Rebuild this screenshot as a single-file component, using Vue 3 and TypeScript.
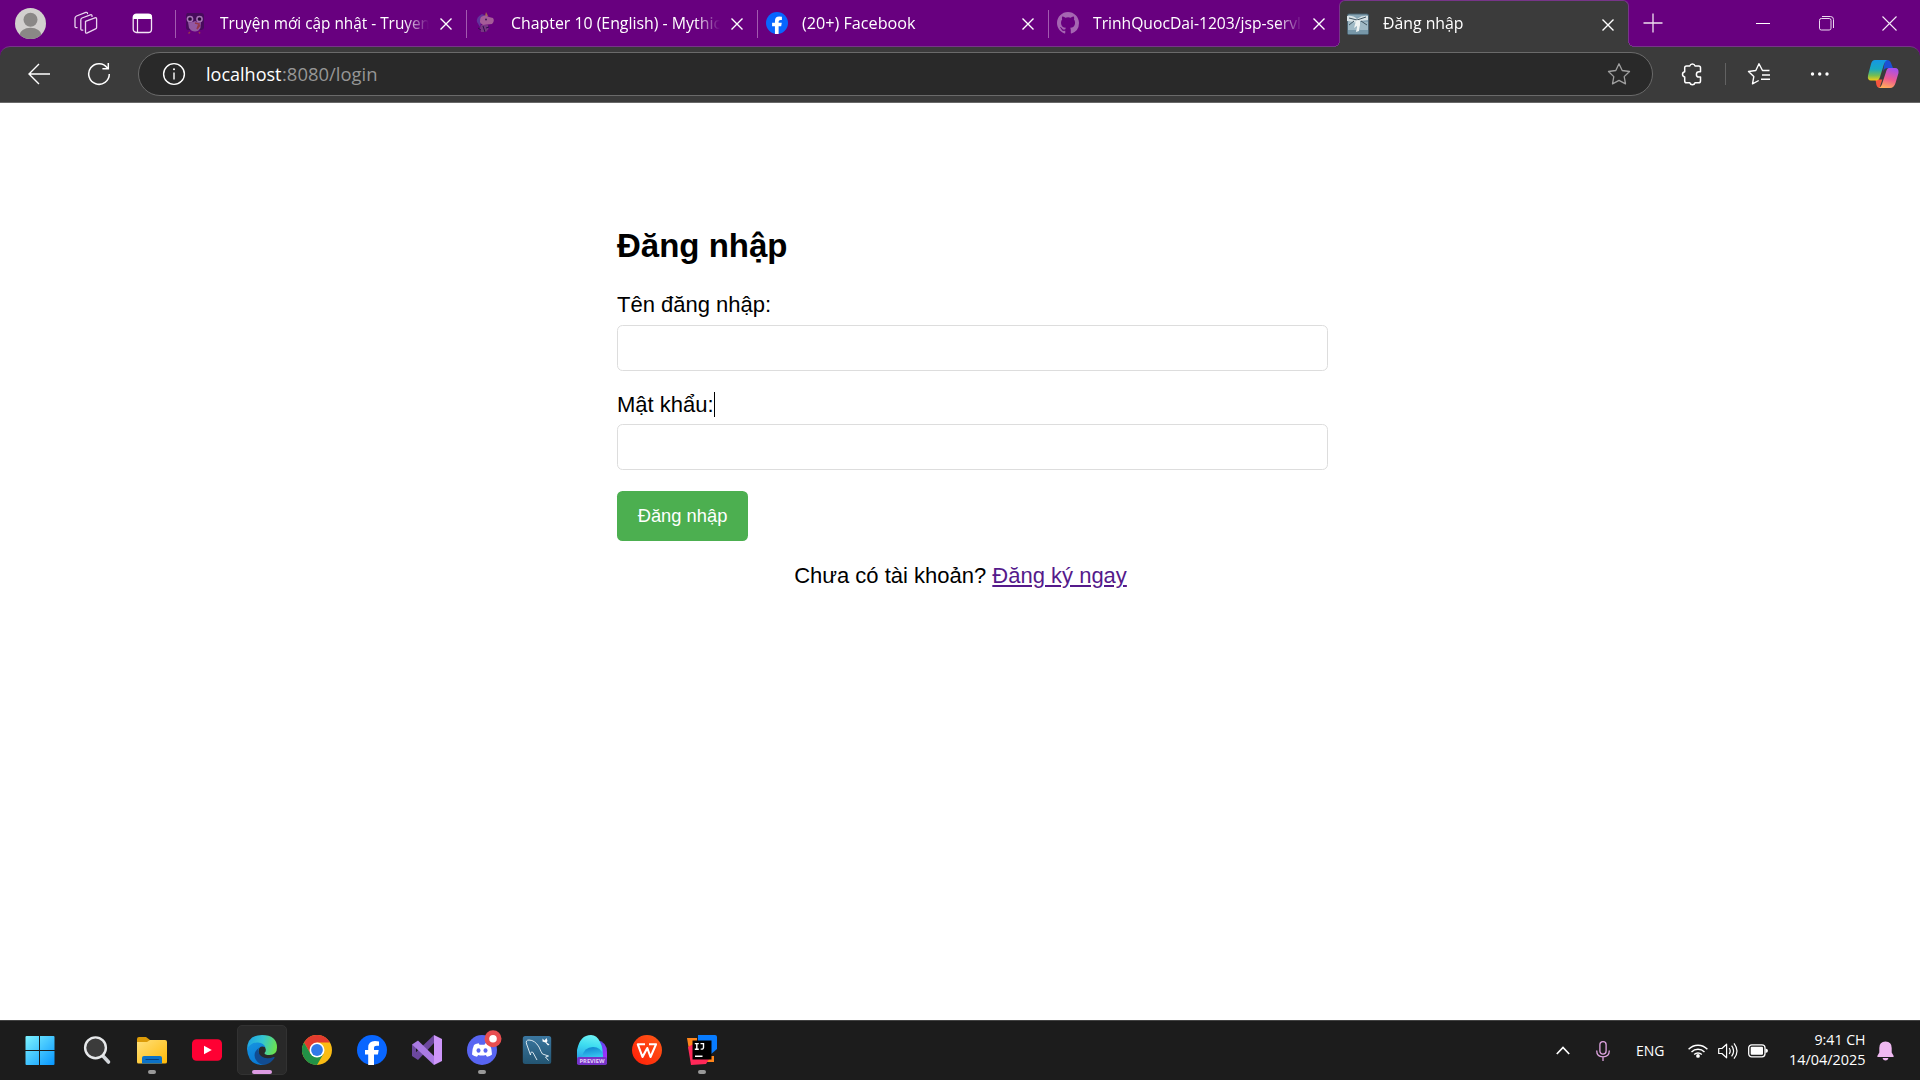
<script setup lang="ts">
import { ref } from 'vue'

interface Tab {
  id: string
  title: string
  width: number
}

const tabs: Tab[] = [
  { id: 'truyen', title: 'Truyện mới cập nhật - Truyen', width: 210 },
  { id: 'mythic', title: 'Chapter 10 (English) - Mythic', width: 210 },
  { id: 'facebook', title: '(20+) Facebook', width: 113.5 },
  { id: 'github', title: 'TrinhQuocDai-1203/jsp-servl', width: 208 },
  { id: 'login', title: 'Đăng nhập', width: 80.5 },
]

const activeTab = ref('login')

const apps = [
  { id: 'start' }, { id: 'search' }, { id: 'files', open: true }, { id: 'youtube' },
  { id: 'edge', active: true }, { id: 'chrome' }, { id: 'facebook' }, { id: 'vs' },
  { id: 'discord', open: true }, { id: 'mysql' }, { id: 'preview' }, { id: 'wps' },
  { id: 'idea', open: true },
]
</script>

<template>
  <div class="screen">
    <header class="tabstrip">
      <div class="strip-tools">
        <svg class="avatar" width="31" height="31" viewBox="0 0 31 31">
          <defs><clipPath id="av"><circle cx="15.5" cy="15.5" r="15.5" /></clipPath></defs>
          <g clip-path="url(#av)">
            <rect width="31" height="31" fill="#d2d0ce" />
            <circle cx="15.5" cy="11.7" r="7" fill="#8a8886" />
            <ellipse cx="15.5" cy="27" rx="11" ry="7.2" fill="#8a8886" />
          </g>
        </svg>
        <svg class="workspaces" width="24" height="24" viewBox="0 0 24 24" fill="none" stroke="#e9d5ee" stroke-width="1.3" stroke-linejoin="round" stroke-linecap="round">
          <path d="M11.5 10.3 20.9 6.8q1.7-.5 1.7 1.2v8.5q0 1-1 1.4l-8.2 4q-1.9.8-1.9-1z" />
          <path d="M18 5.4v-.7q-.2-1.4-1.7-.9L8 7Q6.800 7.500 6.800 9v9q.2 1.500 2 1.100" />
          <path d="M13.500 2.500q-.2-1.600-1.700-1.100L2.500 5Q1 5.700 1 7.200v8.300q.2 1.500 2 1.100" />
        </svg>
        <svg class="tabmenu" width="21" height="21" viewBox="0 0 21 21">
          <rect x="1.200" y="1.200" width="18.300" height="18.300" rx="3.300" fill="none" stroke="#f3e6f5" stroke-width="1.300" />
          <path d="M1 6V4q0-3 3-3h13q3 0 3 3v2z" fill="#fff" />
          <path d="M5.500 6v13.500" stroke="#f3e6f5" stroke-width="1.200" />
        </svg>
      </div>

      <div v-for="tab in tabs" :key="tab.id" class="tab" :class="{ active: tab.id === activeTab }">
        <span class="favicon">
          <svg v-if="tab.id === 'truyen'" width="22" height="22" viewBox="0 0 22 22">
            <path d="M3 1h14q3 0 3 3v11q0 3-3 3H4q-2 0-2-3V3z" fill="#470b5c" />
            <path d="M4 10q4 1 7-1 4 2 6 1l-.5 6q-2 3.500-5.500 3.500T5 16z" fill="#9358a2" />
            <circle cx="6" cy="7" r="2.600" fill="#290b39" stroke="#a873b5" stroke-width="1.500" />
            <circle cx="15.500" cy="7" r="2.600" fill="#290b39" stroke="#a873b5" stroke-width="1.500" />
            <path d="m11 11 4 1-2 5 3-4M6 20l-1.500 1.500M15 20l1 1.500" stroke="#963749" stroke-width="1.500" fill="none" />
          </svg>
          <svg v-else-if="tab.id === 'mythic'" width="22" height="22" viewBox="0 0 22 22">
            <path d="m10 4 1-4 2 4" fill="#a76a4f" />
            <path d="M2 10Q1 5 7 2l4 2-5 7-1 4z" fill="#62329b" />
            <path d="M6 5q4-3 8 0l4 1q2 3-1 6l-9 1q-5-3-2-8z" fill="#a55c98" />
            <path d="M6 13h7l.5 4-2.500 3H6l-1-4z" fill="#783583" />
            <path d="m3 16 3 2M8 14l2 6m4-5-3 1" stroke="#30104c" /><circle cx="11" cy="7.500" r="1" fill="#401858" />
          </svg>
          <svg v-else-if="tab.id === 'facebook'" width="22" height="22" viewBox="0 0 30 30">
            <circle cx="15" cy="15" r="15" fill="#0866ff" />
            <path d="M12.200 30V19.500H8.300v-5h3.900v-2.300q0-6 5.900-6 2.100 0 3.600.4v4.300h-2q-2.500 0-2.500 2.100v1.500h4.300l-.8 5h-3.500V30z" fill="#fff" />
          </svg>
          <svg v-else-if="tab.id === 'github'" width="22" height="22" viewBox="0 0 16 16">
            <path fill="#a566b2" d="M8 0C3.580 0 0 3.580 0 8c0 3.540 2.290 6.530 5.470 7.590.4.070.55-.17.55-.38v-1.490c-2.010.37-2.530-.49-2.690-.94-.09-.23-.48-.94-.82-1.130-.28-.15-.68-.52-.01-.53.63-.01 1.080.58 1.230.82.72 1.210 1.870.87 2.330.66.07-.52.28-.87.51-1.070-1.780-.2-3.640-.89-3.640-3.950 0-.87.31-1.590.82-2.150-.08-.2-.36-1.020.08-2.120 0 0 .67-.21 2.200.82a7.640 7.640 0 0 1 4 0c1.530-1.040 2.200-.82 2.200-.82.44 1.100.16 1.920.08 2.120.51.56.82 1.270.82 2.150 0 3.070-1.870 3.750-3.650 3.950.29.25.54.73.54 1.480v2.200c0 .21.15.46.55.38A8.010 8.010 0 0 0 16 8c0-4.420-3.580-8-8-8z" />
          </svg>
          <svg v-else width="22" height="22" viewBox="0 0 22 22">
            <rect x=".5" y="1" width="21" height="20.500" rx="1.500" fill="#86a4b4" stroke="#4b6371" />
            <path d="M1 9h8v12H1zM13 9h8v12h-8z" fill="#9fb9c5" /><path d="M1 17h20v4H1z" fill="#7797a8" />
            <path d="M0 3q6-1 10 3 5-4 11-3v4l-8 1-3 2-4-1-6-1z" fill="#d8e2e5" />
            <path d="m7 8-5 4M14 8l6 4M2 5l8 2 9-3" stroke="#405561" fill="none" />
            <path d="m10 7 3 1v4l-1 6-3 1 1-6-3 2 2-7z" fill="#eef2f2" />
          </svg>
        </span>
        <svg class="tab-title" width="212" height="26">
          <text x="0" y="18.3" :textLength="tab.width" lengthAdjust="spacingAndGlyphs">{{ tab.title }}</text>
        </svg>
        <svg class="tab-close" width="12" height="12" viewBox="0 0 12 12"><path d="m.5.5 11 11m0-11-11 11" stroke="#fff" stroke-width="1.400" /></svg>
      </div>

      <svg class="new-tab" width="20" height="20" viewBox="0 0 20 20"><path d="M.5 10h19M10 .5v19" stroke="#eee0f0" stroke-width="1.300" /></svg>
      <div class="window-controls">
        <svg width="14" height="14" viewBox="0 0 14 14"><path d="M0 7.500h14" stroke="#fff" /></svg>
        <svg width="15" height="15" viewBox="0 0 15 15" fill="none" stroke="#ecdaf0"><rect x=".5" y="2.500" width="11.500" height="11.500" rx="1.800" /><path d="M3 .5h8.500q3 0 3 3V12" /></svg>
        <svg width="15" height="15" viewBox="0 0 15 15"><path d="m.5.5 14 14m0-14-14 14" stroke="#f5ebf7" stroke-width="1.100" /></svg>
      </div>
    </header>

    <nav class="toolbar">
      <svg class="back" width="24" height="22" viewBox="0 0 24 22" fill="none" stroke="#fff" stroke-width="1.400"><path d="M23 11H2M12 1 2 11l10 10" /></svg>
      <svg class="reload" width="24" height="24" viewBox="0 0 24 24" fill="none" stroke="#fff" stroke-width="1.500"><path d="M22.300 12A10.300 10.300 0 1 1 20.500 6.200M21.300 1v5.800h-5.900" /></svg>
      <div class="address">
        <svg class="info" width="24" height="24" viewBox="0 0 24 24" fill="none" stroke="#fff"><circle cx="12" cy="12" r="10.400" stroke-width="1.400" /><path d="M12 10.500v7" stroke-width="1.400" /><circle cx="12" cy="7.300" r="1" fill="#fff" stroke="none" /></svg>
        <svg class="url" width="180" height="30">
          <text x="0" y="22" fill="#fff" textLength="75.500" lengthAdjust="spacingAndGlyphs">localhost</text>
          <text x="76" y="22" fill="#969696" textLength="95.500" lengthAdjust="spacingAndGlyphs">:8080/login</text>
        </svg>
        <svg class="star" width="24" height="24" viewBox="0 0 24 24" fill="none" stroke="#a0a0a0" stroke-width="1.300" stroke-linejoin="round"><path d="m12 1.800 3.200 6.700 7.300 1-5.300 5.100 1.300 7.300L12 18.400l-6.500 3.500 1.300-7.300L1.500 9.500l7.300-1z" /></svg>
      </div>
      <svg class="puzzle" width="22" height="24" viewBox="0 0 22 24" fill="none" stroke="#fff" stroke-width="1.500" stroke-linejoin="round"><path d="M5.500 3.900H8.800a2.700 2.700 0 0 1 5.200 0h3.700q1.800 0 1.800 1.800v4.100h-1.500a2.600 2.600 0 0 0 0 5.200h1.500v3.900q0 1.800-1.800 1.800H14a2.700 2.700 0 0 1-5.200 0H5.500q-1.800 0-1.800-1.800V15a2.700 2.700 0 0 1 0-5.300v-4q0-1.800 1.800-1.800z" /></svg>
      <span class="divider"></span>
      <svg class="favorites" width="24" height="24" viewBox="0 0 24 24" fill="none" stroke="#fff" stroke-width="1.400" stroke-linejoin="round"><path d="M22.500 8.500h-7L12 1.700 8.800 8.500l-7.300 1 5.300 5.100-1.300 7.300 6.200-3.400M15 13h8M14 17.200h9" /></svg>
      <svg class="more" width="20" height="6" viewBox="0 0 20 6" fill="#fff"><circle cx="2.500" cy="3" r="1.700" /><circle cx="9.700" cy="3" r="1.700" /><circle cx="17" cy="3" r="1.700" /></svg>
      <svg class="copilot" width="32" height="30" viewBox="0 0 32 30">
        <defs>
          <linearGradient id="cb" x1="0" y1="0" x2="0" y2="1"><stop offset="0" stop-color="#1597e5" /><stop offset=".45" stop-color="#19a9c0" /><stop offset=".75" stop-color="#72bd55" /><stop offset="1" stop-color="#f4cd16" /></linearGradient>
          <linearGradient id="cp" x1=".7" y1="0" x2=".4" y2="1"><stop offset="0" stop-color="#a34ff0" /><stop offset=".55" stop-color="#ee5a91" /><stop offset="1" stop-color="#ffab5a" /></linearGradient>
        </defs>
        <path d="M18 1h2q3 0 4 3l2 5h-5q-4 0-5 4z" fill="#1c50d5" />
        <path d="M8.500 20.500h6.800L12.500 29Q10 28.500 9.400 26z" fill="#f5553e" />
        <path d="M8 1h12q-2 1-3 4l-4 13q-1 3.500-4 3.500H4Q.2 21.500 1 16.500L4 5Q5 1 8 1z" fill="url(#cb)" />
        <path d="M22 9h6q4 0 3.500 5l-3 10q-1.500 5-5.500 5H11q3-.500 4-4l4-12q1-4 3-4z" fill="url(#cp)" />
      </svg>
    </nav>

    <main class="page">
      <section class="login">
        <h2>Đăng nhập</h2>
        <form @submit.prevent>
          <div class="group">
            <label for="user">Tên đăng nhập:</label>
            <input id="user" type="text" />
          </div>
          <div class="group">
            <label for="pass">Mật khẩu:<i class="caret"></i></label>
            <input id="pass" type="password" />
          </div>
          <button type="submit">Đăng nhập</button>
        </form>
        <p>Chưa có tài khoản? <a href="#">Đăng ký ngay</a></p>
      </section>
    </main>

    <footer class="taskbar">
      <div class="apps">
        <div v-for="app in apps" :key="app.id" class="app" :class="[app.id, { current: app.active, open: app.open }]">
          <svg v-if="app.id === 'start'" width="30" height="30" viewBox="0 0 30 30">
            <defs><linearGradient id="win" x1="0" y1="0" x2="1" y2="1"><stop offset="0" stop-color="#7df3ff" /><stop offset="1" stop-color="#0796ff" /></linearGradient></defs>
            <path d="M.5 2q0-1 1-1H14v14H.5zM15 1h13.500q1 0 1 1v13H15zM.5 16H14v14H1.500q-1 0-1-1zM15 16h14.500v13q0 1-1 1H15z" fill="url(#win)" />
          </svg>
          <svg v-else-if="app.id === 'search'" width="30" height="30" viewBox="0 0 30 30">
            <path d="m20.500 20.500 6 6.500" stroke="#d2d6da" stroke-width="3.600" stroke-linecap="round" />
            <circle cx="13.500" cy="12.800" r="10.400" fill="#3b3b3b" stroke="#e6e8ea" stroke-width="2.400" />
          </svg>
          <svg v-else-if="app.id === 'files'" width="30" height="30" viewBox="0 0 30 30">
            <defs><linearGradient id="fo" x1="0" y1="0" x2="1" y2="1"><stop offset="0" stop-color="#ffe07a" /><stop offset="1" stop-color="#ffb907" /></linearGradient></defs>
            <path d="M0 4q0-2 2-2h7l4 3h2v8H0z" fill="#dc9b08" />
            <path d="M0 7h10l3-2h15q2 0 2 2v20q0 1.500-2 1.500H1.500Q0 28.500 0 27z" fill="url(#fo)" />
            <path d="M5 28.500V23q0-2 2-2h16q2 0 2 2v5.500z" fill="#0c72c7" /><path d="M9 24.500h12.500" stroke="#07407e" stroke-width="1.200" stroke-linecap="round" />
          </svg>
          <svg v-else-if="app.id === 'youtube'" width="30" height="30" viewBox="0 0 30 30">
            <rect y="4.300" width="30" height="21.500" rx="4.500" fill="#ff0033" /><path d="m12 10.700 7.800 4.300-7.800 4.300z" fill="#fff" />
          </svg>
          <svg v-else-if="app.id === 'edge'" width="30" height="30" viewBox="0 0 30 30">
            <defs>
              <linearGradient id="e1" x1="0" y1=".3" x2="1" y2=".5"><stop offset="0" stop-color="#1ca4e5" /><stop offset=".5" stop-color="#35c6d0" /><stop offset="1" stop-color="#6be34d" /></linearGradient>
              <linearGradient id="e2" x1="0" y1="0" x2=".5" y2="1"><stop offset="0" stop-color="#1794e0" /><stop offset="1" stop-color="#0878d4" /></linearGradient>
            </defs>
            <path d="M0 15Q0 0 15 0t15 12.500Q30 20 22.500 20q-5 0-5-2 1.500-1.300 1.300-3.500Q18 9 11 9 4 9 0 15z" fill="url(#e1)" />
            <path d="M0 14Q4 7 11 7.500q6 .5 7.500 5-6-3-7 3.500Q11 25 22 26q-4 4-8 4Q1 29 0 14z" fill="url(#e2)" />
            <path d="M12 12.800Q5 18 9 25q4 6 10 4.500 5-1.500 8.500-6.500.5-1.400-1-1-3 1.500-6 1.300-7-.5-9-6-.5-2.500.5-4.500z" fill="#114c92" />
          </svg>
          <svg v-else-if="app.id === 'chrome'" width="30" height="30" viewBox="0 0 30 30">
            <circle cx="15" cy="15" r="15" fill="#fbbc14" />
            <path d="M2 7.500A15 15 0 0 1 28 7.500H15L8.500 18.750z" fill="#e33b2e" />
            <path d="M2 7.500A15 15 0 0 0 15 30l6.500-11.250H8.500z" fill="#229247" />
            <circle cx="15" cy="15" r="7.500" fill="#fff" /><circle cx="15" cy="15" r="5.900" fill="#307ae9" />
          </svg>
          <svg v-else-if="app.id === 'facebook'" width="30" height="30" viewBox="0 0 30 30">
            <circle cx="15" cy="15" r="15" fill="#0866ff" />
            <path d="M11.200 30V19.500H8v-4.600h3.200v-2.300q0-6.600 6.800-6.600 2.400 0 4 .5v4.200h-2.200q-2.800 0-2.800 2.400v1.800h4.700l-.8 4.600H17V30z" fill="#fff" />
          </svg>
          <svg v-else-if="app.id === 'vs'" width="30" height="30" viewBox="0 0 30 30">
            <path d="M0 9.500 4 11v8l-4 2zM0 21l22-21v8L6 25z" fill="#6c489e" />
            <path d="m0 9.500 6-4L22 21v9z" fill="#aa7be3" />
            <path d="m22 0 8 4v22l-8 4z" fill="#ce96fa" />
          </svg>
          <svg v-else-if="app.id === 'discord'" width="30" height="30" viewBox="0 0 30 30" class="spill">
            <circle cx="15" cy="15" r="15" fill="#5865f2" />
            <path d="M11.700 8.200Q8 8.800 7 10q-2 4-2 9.500 2 1.700 5 2.300l1.200-1.900q3.800 1 7.600 0l1.200 1.900q3-.6 5-2.300 0-5.500-2-9.500-1-1.200-4.700-1.800l-.8 1.500h-5z" fill="#fff" />
            <ellipse cx="11.500" cy="15.500" rx="2" ry="2.200" fill="#5865f2" /><ellipse cx="18.500" cy="15.500" rx="2" ry="2.200" fill="#5865f2" />
            <circle cx="26" cy="3.800" r="8.500" fill="#e84e50" /><circle cx="26" cy="3.800" r="3.800" fill="#fff" />
          </svg>
          <svg v-else-if="app.id === 'mysql'" width="30" height="30" viewBox="0 0 30 30">
            <defs><linearGradient id="my" x1="0" y1="0" x2="0" y2="1"><stop offset="0" stop-color="#3b77a0" /><stop offset="1" stop-color="#235572" /></linearGradient></defs>
            <rect x=".8" y="1" width="28.400" height="28" rx="2.500" fill="url(#my)" />
            <path d="M8.500 20 4.600 9Q3.300 5 7 5q6 .2 10 7 2 5 3.500 7l6 2-3 1 3 3.500M8.500 20q0-4 2.400-2.600L15 25" fill="none" stroke="#dae7ef" stroke-width="1" />
            <path d="m20.500 3.500 2 2 2-2.500 1 3-1 1.500 3 2-1.500 1-2.500-3-3-1z" fill="#fff" />
          </svg>
          <svg v-else-if="app.id === 'preview'" width="30" height="30" viewBox="0 0 30 30">
            <defs>
              <linearGradient id="p1" x1=".6" y1="0" x2=".4" y2="1"><stop offset="0" stop-color="#6ff3f5" /><stop offset=".45" stop-color="#3ddcf0" /><stop offset="1" stop-color="#2aa6e8" /></linearGradient>
              <linearGradient id="p2" x1="0" y1="0" x2="1" y2="1"><stop offset="0" stop-color="#275ce5" /><stop offset="1" stop-color="#b12aff" /></linearGradient>
              <linearGradient id="p3" x1="0" y1="0" x2=".3" y2="1"><stop offset="0" stop-color="#0d7fcd" /><stop offset="1" stop-color="#35c4f0" /></linearGradient>
            </defs>
            <path d="M20 5q10 2 10 12v7H15z" fill="url(#p2)" />
            <path d="M0 24V15Q3 0 14 0q6 0 9 7 4 7 2 17z" fill="url(#p1)" />
            <path d="M5 22q2-10 11-10 8 0 10 8v3H5z" fill="url(#p3)" />
            <rect y="22" width="30" height="8" rx="1.800" fill="#7633c8" />
            <text x="2.500" y="28.200" font-size="5.200" font-weight="700" fill="#e6d4fa" textLength="25" lengthAdjust="spacingAndGlyphs">PREVIEW</text>
          </svg>
          <svg v-else-if="app.id === 'wps'" width="30" height="30" viewBox="0 0 30 30">
            <defs><linearGradient id="wp" x1="0" y1="1" x2="1" y2="0"><stop offset="0" stop-color="#ff1c08" /><stop offset="1" stop-color="#ff5b16" /></linearGradient></defs>
            <circle cx="15" cy="15" r="15" fill="url(#wp)" />
            <path d="M13 9.300H5.800L10.500 22l4.800-9 3.200 9 5.500-12.700h-7" fill="none" stroke="#fff" stroke-width="2.100" stroke-linejoin="round" />
          </svg>
          <svg v-else width="30" height="30" viewBox="0 0 30 30">
            <path d="M0 3h10v12H2zM18 21h9v6h-9z" fill="#ff851b" />
            <path d="m1 12 9-5 14 14-5 8-15 1z" fill="#ff2858" />
            <path d="m11 0h17q2 0 2 2v12l-7 6H11z" fill="#087cff" />
            <rect x="5.500" y="5.500" width="19" height="19" fill="#000" />
            <path d="M7.800 8.600h4M9.800 8.600v5.600M7.800 14.200h4M13.500 8.600h3v4q0 1.700-2.800 1.500M8 21.200h7.500" fill="none" stroke="#fff" stroke-width="1.400" />
          </svg>
        </div>
      </div>

      <div class="tray">
        <svg class="chevron" width="14" height="9" viewBox="0 0 14 9"><path d="m.8 8 6.200-6.500L13.200 8" fill="none" stroke="#fff" stroke-width="1.700" /></svg>
        <svg class="mic" width="14" height="20" viewBox="0 0 14 20" fill="none" stroke="#dda3df" stroke-width="1.300"><rect x="3.900" y=".7" width="6.200" height="12.500" rx="3.100" /><path d="M.7 9.500q0 6.300 6.300 6.300t6.300-6.300M7 16v4" /></svg>
        <svg class="lang" width="30" height="20"><text x="0" y="15" textLength="28.500" lengthAdjust="spacingAndGlyphs">ENG</text></svg>
        <svg class="wifi" width="20" height="15" viewBox="0 0 20 15" fill="none" stroke="#fff" stroke-width="1.400"><path d="M.6 6.300a13 13 0 0 1 18.800 0M3.500 9a9.200 9.200 0 0 1 13 0M6.200 11.500a5.400 5.400 0 0 1 7.600 0" /><circle cx="10" cy="12.900" r="1.900" fill="#fff" stroke="none" /></svg>
        <svg class="volume" width="20" height="18" viewBox="0 0 20 18" fill="none" stroke="#fff" stroke-width="1.200"><path d="M.7 6.500h3.200l4.700-4.300v13.600l-4.700-4.300H.7z" stroke-linejoin="round" /><path d="M11.200 6q2 3 0 6M13.600 3.700q4 5.300 0 10.600M16 1.300q6 7.700 0 15.400" /></svg>
        <svg class="battery" width="20" height="14" viewBox="0 0 20 14"><rect x=".7" y=".8" width="16.300" height="12" rx="3" fill="none" stroke="#fff" stroke-width="1.300" /><rect x="2.700" y="2.800" width="12.300" height="8" rx="1" fill="#fff" /><path d="M17.500 4.500q2.500.3 2.500 2.300t-2.500 2.300z" fill="#fff" /></svg>
        <svg class="clock" width="78" height="42">
          <text x="25.500" y="15" textLength="51" lengthAdjust="spacingAndGlyphs">9:41 CH</text>
          <text x="0" y="35" textLength="76.500" lengthAdjust="spacingAndGlyphs">14/04/2025</text>
        </svg>
        <svg class="bell" width="17" height="20" viewBox="0 0 17 20" fill="#efb9f1"><path d="M8.500.5q6.200 0 6.200 6.500v4.500l2 3.500q.3 1-.7 1H1q-1 0-.7-1l2-3.500V7Q2.300.5 8.500.5zM5.500 17h6q-.8 2.500-3 2.500t-3-2.500z" /></svg>
      </div>
    </footer>
  </div>
</template>

<style>
body {
  overflow: hidden;
}
</style>

<style scoped>
.screen {
  width: 1920px;
  height: 1080px;
  display: flex;
  flex-direction: column;
  overflow: hidden;
  background: linear-gradient(#68007f 60px, #fff 60px);
  font-family: "Liberation Sans", Arial, sans-serif;
}
svg {
  display: block;
  flex: none;
}
svg text {
  font-family: "Open Sans", "Noto Sans", sans-serif;
}
.tabstrip {
  height: 46px;
  flex: none;
  display: flex;
  background: #68007f;
}
.strip-tools {
  width: 175px;
  flex: none;
  display: flex;
  align-items: center;
  box-sizing: border-box;
  padding-left: 15px;
}
.workspaces {
  margin-left: 28px;
}
.tabmenu {
  margin-left: 34px;
}
.tab {
  width: 291px;
  height: 47px;
  box-sizing: border-box;
  flex: none;
  display: flex;
  align-items: center;
  padding-left: 8px;
  background: linear-gradient(#a35ab0, #a35ab0) 0 10px / 1px 28px no-repeat;
}
.favicon {
  width: 22px;
  margin: 0 14px 1px 1px;
}
.tab-title {
  -webkit-mask-image: linear-gradient(to right, #000 184px, transparent 209px);
  mask-image: linear-gradient(to right, #000 184px, transparent 209px);
}
.tab-title text {
  font-size: 16px;
  fill: #fff;
}
.tab-close {
  margin: 1px 0 0 8px;
}
.tab.active {
  position: relative;
  width: 290px;
  padding-left: 6px;
  background: #3b3b3b;
  border: 1px solid #773589;
  border-bottom: 0;
  border-radius: 6px 6px 0 0;
}
.tab.active .tab-close {
  margin-left: 7px;
}
.tab.active::before,
.tab.active::after {
  content: "";
  position: absolute;
  bottom: 0;
  width: 6px;
  height: 6px;
}
.tab.active::before {
  left: -6px;
  background: radial-gradient(circle at 0 0, #68007f 5px, #773589 5px 6px, #3b3b3b 6px);
}
.tab.active::after {
  right: -6px;
  background: radial-gradient(circle at 100% 0, #68007f 5px, #773589 5px 6px, #3b3b3b 6px);
}
.new-tab {
  align-self: center;
  margin-left: 14px;
}
.window-controls {
  display: flex;
  align-items: center;
  margin-left: 93px;
  gap: 48.5px;
}
.toolbar {
  height: 57px;
  box-sizing: border-box;
  flex: none;
  display: flex;
  align-items: center;
  padding: 0 0 1px 27px;
  background: #3b3b3b;
  border-top: 1px solid #773589;
  border-bottom: 1px solid #696969;
  border-radius: 10px 10px 0 0;
}
.reload {
  margin-left: 36px;
}
.address {
  width: 1515px;
  height: 44px;
  box-sizing: border-box;
  flex: none;
  display: flex;
  align-items: center;
  margin-left: 27px;
  padding-left: 23px;
  background: #292929;
  border: 1px solid #6a6a6a;
  border-radius: 22px;
}
.url {
  margin-left: 20px;
}
.url text {
  font-size: 18.5px;
}
.star {
  margin-left: 1221px;
}
.puzzle {
  margin-left: 28px;
}
.divider {
  width: 1px;
  height: 22px;
  margin-left: 22px;
  background: #626262;
}
.favorites {
  margin-left: 21px;
}
.more {
  margin-left: 39px;
}
.copilot {
  margin-left: 37px;
}
.page {
  flex: 1;
  min-height: 0;
  font-size: 22px;
  line-height: 25px;
  color: #000;
}
.login {
  width: 687px;
  margin: 0 auto 0 617px;
  padding-top: 124px;
}
.login h2 {
  margin: 0 0 27px;
  font-size: 33px;
  line-height: 38px;
  font-weight: 700;
}
.group {
  margin-bottom: 21px;
}
.group label {
  display: flex;
  align-items: center;
  margin-bottom: 8px;
  height: 25px;
}
.group input {
  display: block;
  width: 687px;
  height: 22px;
  box-sizing: content-box;
  padding: 11px;
  border: 1px solid #ddd;
  border-radius: 5.5px;
  outline: 0;
}
.group + .group label {
  margin-bottom: 7px;
}
.caret {
  width: 1px;
  height: 25px;
  background: #000;
}
.login button {
  display: block;
  margin: 0;
  width: 131px;
  height: 50px;
  padding: 0;
  border: 0;
  border-radius: 5.5px;
  background: #4caf50;
  color: #fff;
  font: 18.333px "Liberation Sans", Arial, sans-serif;
}
.login p {
  margin: 22px 0 0;
  text-align: center;
}
.login a {
  color: #551a8b;
}
.taskbar {
  height: 60px;
  flex: none;
  box-sizing: border-box;
  border-top: 1px solid #424242;
  display: flex;
  justify-content: space-between;
  background: #1c1c1c;
}
.apps {
  display: flex;
  gap: 5px;
  padding: 4px 0 0 15px;
}
.app {
  position: relative;
  width: 50px;
  height: 50px;
  box-sizing: border-box;
  display: flex;
  align-items: center;
  justify-content: center;
  border: 1px solid transparent;
  border-radius: 5px;
}
.app.start {
  margin-right: 2px;
}
.app.current {
  background: #292929;
  border-color: #323232;
}
.spill {
  overflow: visible;
}
.app.current::after,
.app.open::after {
  content: "";
  position: absolute;
  bottom: 0;
  width: 8px;
  height: 4px;
  border-radius: 2px;
  background: #999;
}
.app.current::after {
  width: 20px;
  background: #dc9be2;
}
.tray {
  display: flex;
  align-items: center;
  padding-right: 26px;
}
.mic {
  margin-left: 26px;
}
.lang {
  margin-left: 26px;
}
.lang text,
.clock text {
  font-size: 14.5px;
  fill: #fff;
}
.wifi {
  margin-left: 22px;
}
.volume {
  margin-left: 10px;
}
.battery {
  margin-left: 10px;
}
.clock {
  margin-left: 21px;
}
.bell {
  margin-left: 10px;
}
</style>
